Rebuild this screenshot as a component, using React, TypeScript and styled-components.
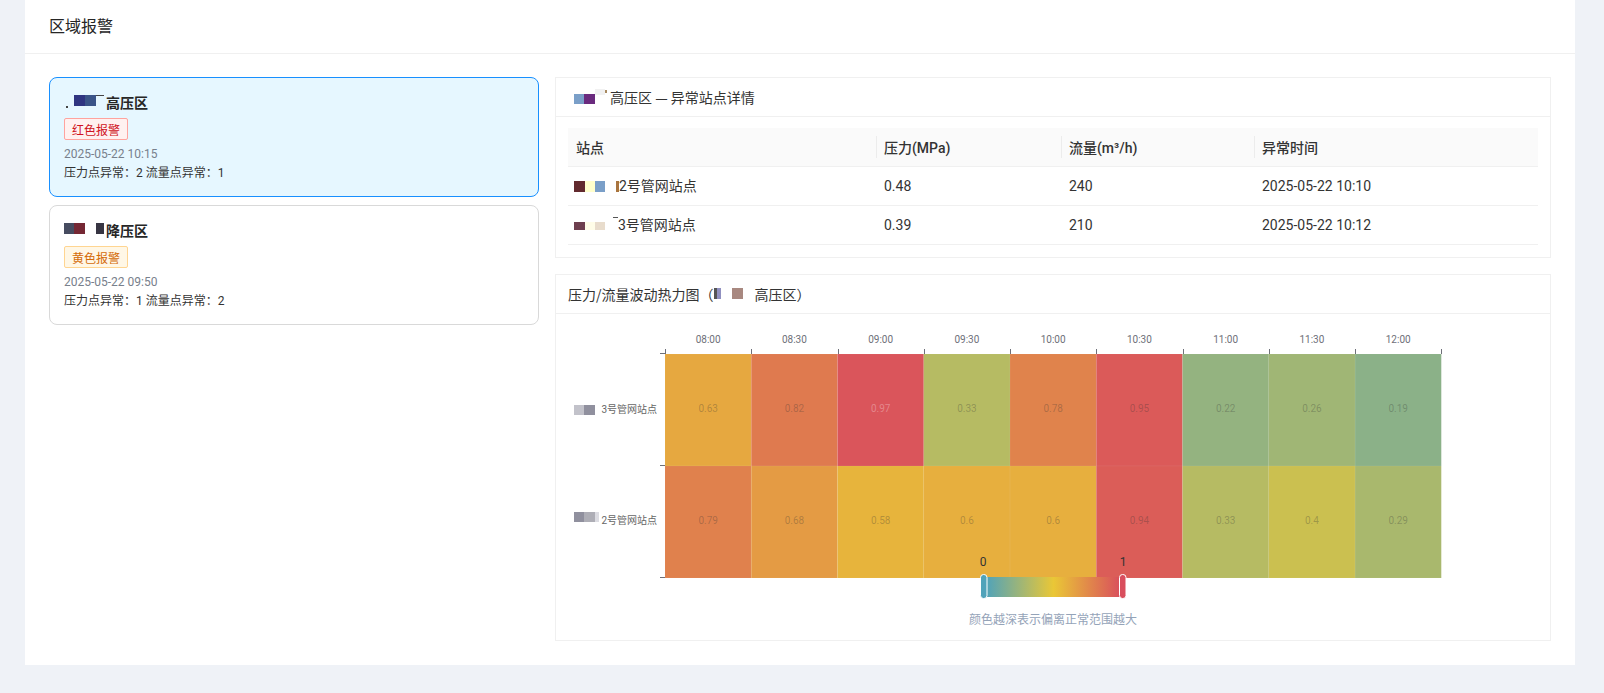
import styled, { createGlobalStyle } from "styled-components";

const FONT = `Roboto, "Noto Sans CJK SC", sans-serif`;

const GlobalStyle = createGlobalStyle`
  html, body {
    margin: 0;
    background: #eff2f7;
    font-family: ${FONT};
    color: #262626;
  }
  * { box-sizing: border-box; }
`;

const Page = styled.div`
  padding: 0 29px 28px 25px;
`;

const Main = styled.main`
  background: #fff;
`;

const PageHeader = styled.header`
  height: 54px;
  padding: 0 24px 4px;
  display: flex;
  align-items: center;
  border-bottom: 1px solid #f0f0f0;
  font-size: 16px;
`;

const Content = styled.div`
  padding: 23px 24px 24px;
  display: grid;
  grid-template-columns: 490px 1fr;
  column-gap: 16px;
  align-items: start;
`;

const AlarmList = styled.div`
  display: flex;
  flex-direction: column;
  gap: 8px;
`;

const AlarmCard = styled.div<{ $active?: boolean }>`
  height: 120px;
  padding: 13px 14px;
  border-radius: 8px;
  border: 1px solid ${(p) => (p.$active ? "#1890ff" : "#d9d9d9")};
  background: ${(p) => (p.$active ? "#e6f7ff" : "#fff")};
`;

const CardTitle = styled.div`
  display: flex;
  align-items: center;
  height: 22px;
  font-size: 14px;
  font-weight: 700;
  color: #262626;
`;

const AlarmTag = styled.span<{ $level: "red" | "orange" }>`
  display: inline-flex;
  align-items: center;
  height: 22px;
  margin-top: 5px;
  padding: 0 7px;
  font-size: 12px;
  border-radius: 2px;
  border: 1px solid ${(p) => (p.$level === "red" ? "#ffa39e" : "#ffd591")};
  background: ${(p) => (p.$level === "red" ? "#fff1f0" : "#fff7e6")};
  color: ${(p) => (p.$level === "red" ? "#cf1322" : "#d46b08")};
`;

const AlarmTime = styled.div`
  margin-top: 5px;
  height: 19px;
  line-height: 19px;
  font-size: 12px;
  color: #78808c;
`;

const AlarmStats = styled.div`
  height: 19px;
  line-height: 19px;
  font-size: 12px;
  color: #333;
`;

const Side = styled.div`
  display: flex;
  flex-direction: column;
  gap: 16px;
`;

const Panel = styled.section`
  border: 1px solid #f0f0f0;
`;

const PanelHead = styled.div`
  height: 39px;
  padding: 0 12px;
  display: flex;
  align-items: center;
  border-bottom: 1px solid #f0f0f0;
  font-family: "Noto Sans CJK SC", sans-serif;
  font-size: 14px;
  color: #333;
`;

const PanelBody = styled.div`
  padding: 11px 12px 12px;
`;

const Table = styled.table`
  width: 100%;
  table-layout: fixed;
  border-collapse: collapse;
  font-size: 14px;
`;

const Th = styled.th<{ $width?: number }>`
  position: relative;
  height: 38px;
  padding: 0 8px;
  text-align: left;
  font-weight: 500;
  background: #fafafa;
  border-bottom: 1px solid #f0f0f0;
  color: #333;
  width: ${(p) => (p.$width ? `${p.$width}px` : "auto")};

  &:not(:first-child)::before {
    content: "";
    position: absolute;
    left: 0;
    top: 8px;
    height: 22px;
    width: 1px;
    background: #ececec;
  }
`;

const Td = styled.td`
  height: 39px;
  padding: 0 8px;
  border-bottom: 1px solid #f0f0f0;
  color: #333;
`;

const SiteName = styled.div`
  display: flex;
  align-items: center;
  padding-bottom: 2px;
`;

const Mosaic = styled.span<{ $width: number; $shift?: number }>`
  display: inline-flex;
  align-items: flex-start;
  flex: none;
  width: ${(p) => p.$width}px;
  height: 16px;
  margin-left: ${(p) => p.$shift ?? 0}px;
`;

const Tile = styled.i<{ $w: number; $h: number; $y: number; $c: string }>`
  display: block;
  flex: none;
  width: ${(p) => p.$w}px;
  height: ${(p) => p.$h}px;
  margin-top: ${(p) => p.$y}px;
  background: ${(p) => p.$c};
`;

const ChartBody = styled.div`
  height: 326px;
`;

const ChartSvg = styled.svg`
  display: block;
`;

const AxisText = styled.text`
  font-family: ${FONT};
  font-size: 10px;
  fill: #6e7079;
  text-anchor: middle;
  dominant-baseline: central;
`;

const SiteText = styled.text`
  font-family: ${FONT};
  font-size: 10px;
  fill: #666;
  text-anchor: end;
  dominant-baseline: central;
`;

const CellText = styled.text<{ $light?: boolean }>`
  font-family: ${FONT};
  font-size: 10px;
  fill: ${(p) => (p.$light ? "rgba(255,255,255,.3)" : "rgba(50,50,50,.3)")};
  text-anchor: middle;
  dominant-baseline: central;
`;

const RangeText = styled.text`
  font-family: ${FONT};
  font-size: 12px;
  fill: #333;
  text-anchor: middle;
  dominant-baseline: central;
`;

const Caption = styled.div`
  height: 34px;
  padding-top: 4px;
  line-height: 20px;
  text-align: center;
  font-size: 12px;
  color: #94a3b8;
`;

type TileSpec = [number, number, number, string];

const blots = ({ tiles, width, shift }: { tiles: TileSpec[]; width: number; shift?: number }) => (
  <Mosaic $width={width} $shift={shift}>
    {tiles.map(([w, h, y, c], i) => (
      <Tile key={i} $w={w} $h={h} $y={y} $c={c} />
    ))}
  </Mosaic>
);

const CLEAR = "transparent";

const times = ["08:00", "08:30", "09:00", "09:30", "10:00", "10:30", "11:00", "11:30", "12:00"];
const rows = [
  { name: "3号管网站点", values: [0.63, 0.82, 0.97, 0.33, 0.78, 0.95, 0.22, 0.26, 0.19] },
  { name: "2号管网站点", values: [0.79, 0.68, 0.58, 0.6, 0.6, 0.94, 0.33, 0.4, 0.29] },
];

const STOPS = [
  [80, 163, 186],
  [234, 199, 54],
  [217, 78, 93],
];

const heatColor = (v: number) => {
  const [a, b, t] = v < 0.5 ? [STOPS[0], STOPS[1], v * 2] : [STOPS[1], STOPS[2], (v - 0.5) * 2];
  const mix = a.map((x, i) => Math.round(x + (b[i] - x) * t));
  return `rgb(${mix.join(",")})`;
};

const X0 = 109;
const Y0 = 40;
const CELL_W = 776.3 / 9;
const CELL_H = 112;

function Heatmap() {
  return (
    <ChartSvg width="994" height="292" viewBox="0 0 994 292">
      <defs>
        <linearGradient id="range">
          <stop offset="0" stopColor="#50a3ba" />
          <stop offset="0.5" stopColor="#eac736" />
          <stop offset="1" stopColor="#d94e5d" />
        </linearGradient>
      </defs>

      {rows.map((row, r) =>
        row.values.map((v, c) => (
          <rect
            key={`${r}-${c}`}
            x={X0 + c * CELL_W}
            y={Y0 + r * CELL_H}
            width={CELL_W}
            height={CELL_H}
            fill={heatColor(v)}
            stroke="rgba(255,255,255,.05)"
          />
        ))
      )}

      {rows.map((row, r) =>
        row.values.map((v, c) => (
          <CellText
            key={`${r}-${c}`}
            $light={v > 0.96}
            x={X0 + (c + 0.5) * CELL_W}
            y={Y0 + r * CELL_H + 54}
          >
            {v}
          </CellText>
        ))
      )}

      {times.map((t, i) => (
        <AxisText key={t} x={X0 + (i + 0.5) * CELL_W} y={25}>
          {t}
        </AxisText>
      ))}
      {Array.from({ length: 10 }, (_, i) => {
        const x = Math.round(X0 + i * CELL_W) + 0.5;
        return <line key={i} x1={x} x2={x} y1={35} y2={40} stroke="#6e7079" />;
      })}
      {[0, 1, 2].map((i) => {
        const y = Y0 + i * CELL_H - 0.5;
        return <line key={i} x1={104} x2={109} y1={y} y2={y} stroke="#6e7079" />;
      })}

      <rect x={18} y={91} width={11} height={10} fill="#c2c2ca" />
      <rect x={28} y={91} width={11} height={10} fill="#90909e" />
      <rect x={18} y={198} width={10} height={10} fill="#90909e" />
      <rect x={28} y={198} width={11} height={10} fill="#aeaeb6" />
      <rect x={39} y={198} width={4} height={10} fill="#dcdce2" />
      <SiteText x={101} y={95}>
        {rows[0].name}
      </SiteText>
      <SiteText x={101} y={206}>
        {rows[1].name}
      </SiteText>

      <rect x={430} y={263} width={135} height={20} fill="url(#range)" />
      <rect x={424.5} y={260.5} width={6.5} height={24} rx={3} fill="#50a3ba" stroke="#fff" />
      <rect x={563.5} y={260.5} width={6.5} height={24} rx={3} fill="#d94e5d" stroke="#fff" />
      <RangeText x={427} y={248}>
        0
      </RangeText>
      <RangeText x={567} y={248}>
        1
      </RangeText>
    </ChartSvg>
  );
}

export default function App() {
  return (
    <Page>
      <GlobalStyle />
      <Main>
        <PageHeader>区域报警</PageHeader>
        <Content>
          <AlarmList>
            <AlarmCard $active>
              <CardTitle>
                {blots({
                  width: 42,
                  tiles: [
                    [2, 2, 12, CLEAR],
                    [2, 2, 12, "#444"],
                    [6, 1, 0, CLEAR],
                    [11, 11, 1, "#2f3581"],
                    [11, 11, 1, "#3a5488"],
                    [8, 1, 1, "#444"],
                  ],
                })}
                高压区
              </CardTitle>
              <AlarmTag $level="red">红色报警</AlarmTag>
              <AlarmTime>2025-05-22 10:15</AlarmTime>
              <AlarmStats>压力点异常：2 流量点异常：1</AlarmStats>
            </AlarmCard>
            <AlarmCard>
              <CardTitle>
                {blots({
                  width: 42,
                  tiles: [
                    [10, 11, 1, "#464c60"],
                    [11, 11, 1, "#752834"],
                    [11, 11, 1, CLEAR],
                    [8, 11, 1, "#373543"],
                  ],
                })}
                降压区
              </CardTitle>
              <AlarmTag $level="orange">黄色报警</AlarmTag>
              <AlarmTime>2025-05-22 09:50</AlarmTime>
              <AlarmStats>压力点异常：1 流量点异常：2</AlarmStats>
            </AlarmCard>
          </AlarmList>

          <Side>
            <Panel>
              <PanelHead>
                {blots({
                  width: 42,
                  tiles: [
                    [6, 10, 0, CLEAR],
                    [10, 10, 5, "#7a9fc8"],
                    [11, 10, 5, "#6a2a7e"],
                    [10, 6, 0, "#f1f1f1"],
                    [2, 3, 1, "#a88a60"],
                  ],
                })}
                高压区 — 异常站点详情
              </PanelHead>
              <PanelBody>
                <Table>
                  <thead>
                    <tr>
                      <Th $width={308}>站点</Th>
                      <Th $width={185}>压力(MPa)</Th>
                      <Th $width={193}>流量(m³/h)</Th>
                      <Th>异常时间</Th>
                    </tr>
                  </thead>
                  <tbody>
                    <tr>
                      <Td>
                        <SiteName>
                          {blots({
                            width: 45,
                            shift: -2,
                            tiles: [
                              [11, 11, 4, "#622a2e"],
                              [10, 11, 4, "#ffffcc"],
                              [10, 11, 4, "#7a9fc8"],
                              [11, 11, 4, CLEAR],
                              [3, 11, 4, "#a8743f"],
                            ],
                          })}
                          2号管网站点
                        </SiteName>
                      </Td>
                      <Td>0.48</Td>
                      <Td>240</Td>
                      <Td>2025-05-22 10:10</Td>
                    </tr>
                    <tr>
                      <Td>
                        <SiteName>
                          {blots({
                            width: 44,
                            shift: -2,
                            tiles: [
                              [11, 8, 6, "#6e3f4f"],
                              [10, 8, 6, "#fffde8"],
                              [10, 8, 6, "#e8dccc"],
                              [8, 1, 0, CLEAR],
                              [5, 1, 1, "#555"],
                            ],
                          })}
                          3号管网站点
                        </SiteName>
                      </Td>
                      <Td>0.39</Td>
                      <Td>210</Td>
                      <Td>2025-05-22 10:12</Td>
                    </tr>
                  </tbody>
                </Table>
              </PanelBody>
            </Panel>

            <Panel>
              <PanelHead>
                压力/流量波动热力图（
                {blots({
                  width: 41,
                  tiles: [
                    [3, 11, 2, "#555"],
                    [4, 11, 2, "#9090c0"],
                    [11, 1, 0, CLEAR],
                    [11, 11, 2, "#a88880"],
                  ],
                })}
                高压区）
              </PanelHead>
              <ChartBody>
                <Heatmap />
                <Caption>颜色越深表示偏离正常范围越大</Caption>
              </ChartBody>
            </Panel>
          </Side>
        </Content>
      </Main>
    </Page>
  );
}
